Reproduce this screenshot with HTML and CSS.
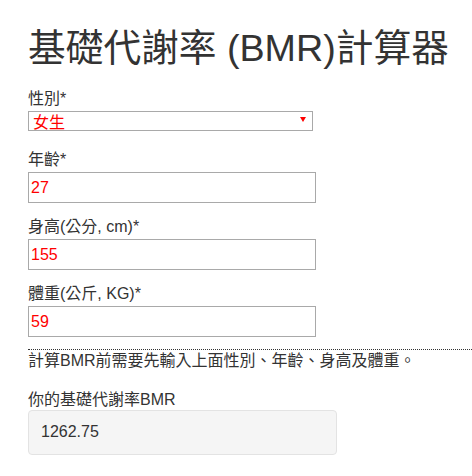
FILE: index.html
```html
<!DOCTYPE html>
<html lang="zh-Hant">
<head>
<meta charset="utf-8">
<title>基礎代謝率 (BMR)計算器</title>
<link rel="stylesheet" href="styles.css">
</head>
<body>
<main class="page">
  <h1 class="title">基礎代謝率 (BMR)計算器</h1>
  <form class="form">
    <div class="field field-select">
      <label class="label" for="sex">性別*</label>
      <div class="select-wrap">
        <select id="sex" class="select">
          <option>女生</option>
          <option>男生</option>
        </select>
      </div>
    </div>
    <div class="field">
      <label class="label" for="age">年齡*</label>
      <input id="age" class="input" type="text" value="27">
    </div>
    <div class="field">
      <label class="label" for="height">身高(公分, cm)*</label>
      <input id="height" class="input" type="text" value="155">
    </div>
    <div class="field">
      <label class="label" for="weight">體重(公斤, KG)*</label>
      <input id="weight" class="input" type="text" value="59">
    </div>
  </form>
  <p class="note">計算BMR前需要先輸入上面性別、年齡、身高及體重。</p>
  <div class="result">
    <div class="label">你的基礎代謝率BMR</div>
    <div class="result-box">1262.75</div>
  </div>
</main>
</body>
</html>
```

FILE: styles.css
```css
html, body {
  margin: 0;
  padding: 0;
  background: #fff;
}

body {
  font-family: "Liberation Sans", "Noto Sans CJK TC", sans-serif;
  font-size: 16px;
  line-height: 20px;
  color: #333;
}

.page {
  padding: 28px 0 0 28px;
}

.title {
  margin: 0 0 20px 0;
  font-size: 37.7px;
  line-height: 41px;
  font-weight: normal;
  color: #333;
}

.form {
  margin: 0;
}

.field {
  margin-bottom: 14px;
}

.field-select {
  margin-bottom: 19px;
}

.label {
  display: block;
  line-height: 20px;
  margin-bottom: 2px;
}

.select-wrap {
  position: relative;
  width: 285px;
}

.select {
  display: block;
  box-sizing: border-box;
  width: 285px;
  height: 20px;
  margin: 0;
  padding: 2px 0 0 4px;
  border: 1px solid #a9a9a9;
  border-radius: 0;
  background: #fff;
  color: #f00;
  font-family: inherit;
  font-size: 16px;
  line-height: 18px;
  appearance: none;
  -webkit-appearance: none;
  overflow: hidden;
}

.select-wrap::after {
  content: "";
  position: absolute;
  right: 7px;
  top: 6px;
  border-left: 3px solid transparent;
  border-right: 3px solid transparent;
  border-top: 5px solid #f00;
  pointer-events: none;
}

.input {
  display: block;
  box-sizing: border-box;
  width: 288px;
  height: 31px;
  margin: 0;
  padding: 0 2px;
  border: 1px solid #a9a9a9;
  border-radius: 0;
  background: #fff;
  color: #f00;
  font-family: inherit;
  font-size: 16px;
}

.note {
  margin: -2px 0 19px 0;
  padding-top: 1px;
  border-top: 1px dotted #333;
  line-height: 20px;
}

.result .label {
  margin-bottom: 0;
}

.result-box {
  box-sizing: border-box;
  width: 309px;
  padding: 11px 12px 12px;
  background: #f5f5f5;
  border: 1px solid #e3e3e3;
  border-radius: 4px;
  line-height: 20px;
  color: #333;
}
```
